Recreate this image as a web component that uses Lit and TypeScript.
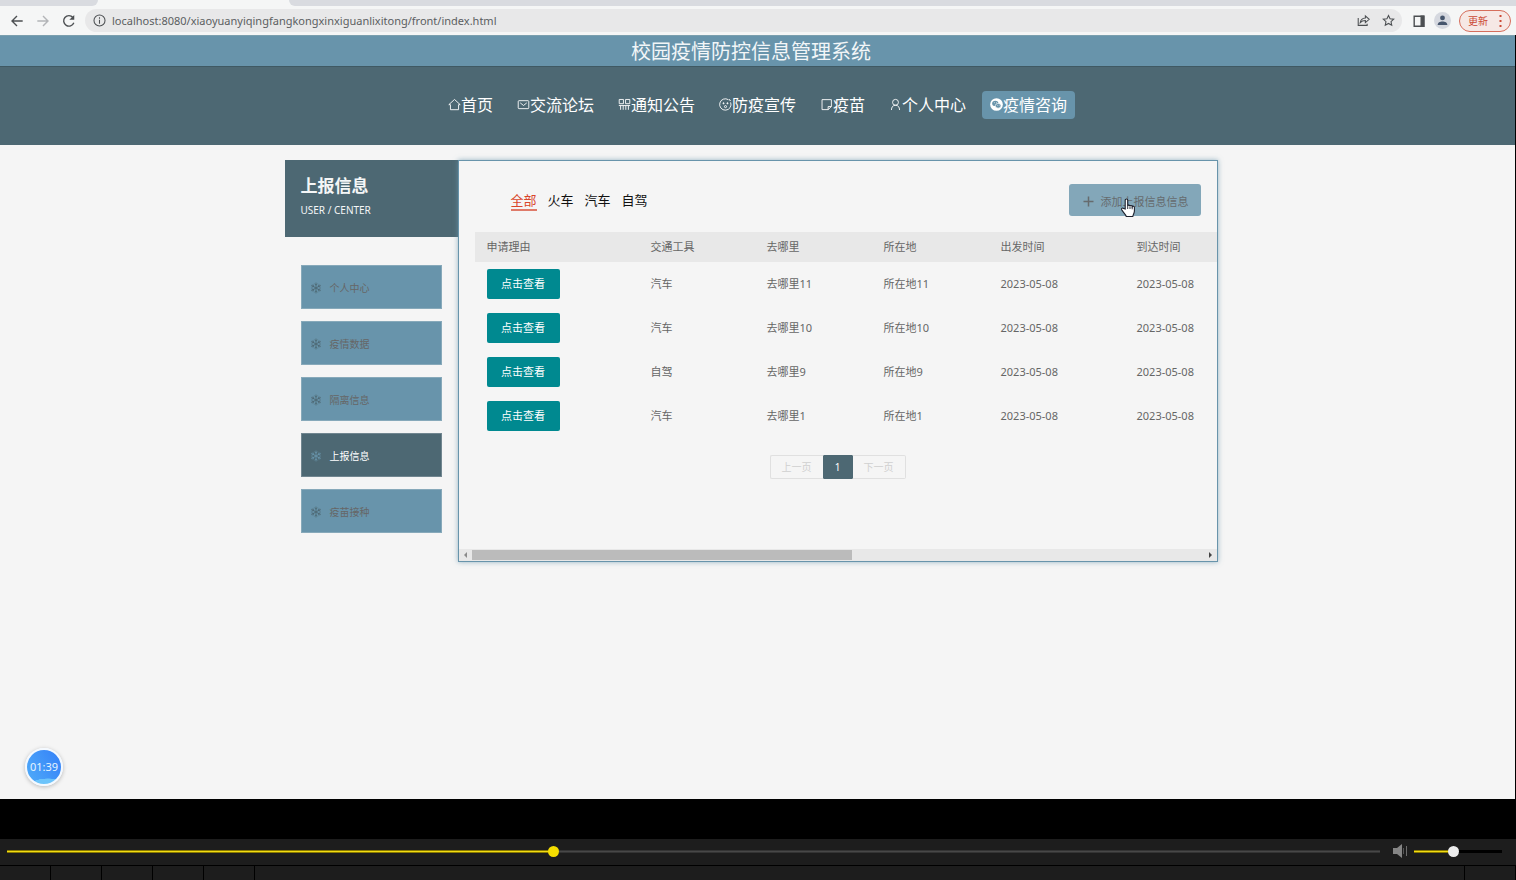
import { LitElement, html, css, svg } from "lit";
import { customElement, state } from "lit/decorators.js";
import { classMap } from "lit/directives/class-map.js";

const stroke = (body: unknown, cls = "glyph") => html`<svg class=${cls} viewBox="0 0 16 16" fill="none" stroke="currentColor" stroke-width="1.1" aria-hidden="true">${body}</svg>`;

const icons = {
  home: stroke(svg`<path d="M1 8.2 8 1.8l7 6.4h-2V14.4H3V8.2z"/>`),
  mail: stroke(svg`<rect x="1.5" y="3.3" width="13" height="9.8" rx="1"/><path d="M4 6l4 3.2L12 6"/>`),
  notice: stroke(svg`<path d="M1.5 1.8h5.2v5.2H1.500zM9.300 1.800h5.200v5.200H9.300zM1 9.300h14M3.200 9.300v5.200M6.400 9.300v5.200M9.600 9.300v5.200M12.800 9.300v5.200"/>`),
  face: stroke(svg`<path d="M14.300 5.400A7 7 0 1 1 11.600 2.100"/><path d="M12.600 1.300l.4 1.500 1.500.3"/><circle cx="5.600" cy="6.500" r=".7" fill="currentColor"/><circle cx="10.400" cy="6.500" r=".7" fill="currentColor"/><circle cx="8" cy="10.600" r="1.300"/>`),
  note: stroke(svg`<path d="M2.500 2h11.500v8.500L10 14.300H2.500zM10 14.300v-3.800h4"/>`),
  user: stroke(svg`<circle cx="8" cy="5.300" r="3.600"/><path d="M3 14.800c0-3.500 1.800-5.900 5-5.900s5 2.400 5 5.900"/>`),
  chat: html`<svg class="glyph" viewBox="0 0 16 16" aria-hidden="true"><circle cx="8" cy="8" r="7.800" fill="#fff"/><ellipse cx="6.500" cy="6.700" rx="3.800" ry="3.200" fill="#6894ab"/><ellipse cx="10" cy="9.600" rx="3.500" ry="2.900" fill="#6894ab" stroke="#fff" stroke-width=".8"/><g fill="#fff"><circle cx="5.300" cy="5.900" r=".6"/><circle cx="8" cy="5.900" r=".6"/><circle cx="9" cy="9" r=".5"/><circle cx="11.200" cy="9" r=".5"/></g></svg>`,
  snow: stroke(
    [0, 60, 120, 180, 240, 300].map((a) => svg`<path transform="rotate(${a} 8 8)" d="M8 8V.8M6 2.200 8 4.200l2-2"/>`),
    "snow"
  ),
};

const NAV = [
  { label: "首页", icon: icons.home },
  { label: "交流论坛", icon: icons.mail },
  { label: "通知公告", icon: icons.notice },
  { label: "防疫宣传", icon: icons.face },
  { label: "疫苗", icon: icons.note },
  { label: "个人中心", icon: icons.user },
  { label: "疫情咨询", icon: icons.chat },
];

const MENU = ["个人中心", "疫情数据", "隔离信息", "上报信息", "疫苗接种"];
const FILTERS = ["全部", "火车", "汽车", "自驾"];
const COLUMNS = ["申请理由", "交通工具", "去哪里", "所在地", "出发时间", "到达时间"];
const ROWS = [
  ["汽车", "去哪里11", "所在地11", "2023-05-08", "2023-05-08"],
  ["汽车", "去哪里10", "所在地10", "2023-05-08", "2023-05-08"],
  ["自驾", "去哪里9", "所在地9", "2023-05-08", "2023-05-08"],
  ["汽车", "去哪里1", "所在地1", "2023-05-08", "2023-05-08"],
];

@customElement("browser-bar")
class BrowserBar extends LitElement {
  static styles = css`
    :host { display: block; background: #f5f6f6; color: #4c4f52; }
    .tabs { display: flex; height: 6px; background: #f5f6f6; }
    .tab { width: 98px; background: #d9dbe0; border-bottom-right-radius: 6px; }
    .active { width: 191px; }
    .rest { flex: 1; background: #d9dbe0; border-bottom-left-radius: 6px; }
    .bar { display: flex; align-items: center; height: 29px; box-sizing: border-box; padding: 0 5px 0 10px; gap: 12px; }
    button { display: flex; align-items: center; justify-content: center; padding: 0; border: 0; background: none; color: inherit; font: inherit; }
    svg { display: block; width: 14px; height: 14px; fill: none; stroke: currentColor; stroke-width: 1.6; }
    .faded { color: #b3b5b8; }
    .address { flex: 1; display: flex; align-items: center; gap: 6px; height: 23px; margin-left: -3px; padding: 0 7px 0 8px; border-radius: 12px; background: #e8e8e9; }
    .address svg { width: 13px; height: 13px; stroke-width: 1.3; }
    input { flex: 1; min-width: 0; border: 0; padding: 0; outline: 0; background: none; color: #5b5e61; font: 11px/20px "Noto Sans", "Noto Sans CJK SC", sans-serif; }
    .tools { display: flex; gap: 12px; }
    .right { display: flex; align-items: center; gap: 8px; margin-left: -2px; }
    .avatar { width: 17px; height: 17px; border-radius: 50%; background: #d5d8df; color: #46566d; }
    .avatar svg { fill: currentColor; stroke: none; width: 13px; height: 13px; }
    .update { height: 22px; box-sizing: border-box; gap: 11px; padding: 0 8px; border: 1px solid #d66e5c; border-radius: 11px; background: #f6e8e5; color: #cb4a36; font-size: 10px; font-family: "Noto Sans CJK SC", sans-serif; }
    .dots { width: 3px; height: 12px; fill: currentColor; stroke: none; }
  `;
  render() {
    return html`
      <div class="tabs"><span class="tab"></span><span class="active"></span><span class="rest"></span></div>
      <div class="bar">
        <button aria-label="后退"><svg viewBox="0 0 16 16"><path d="M14.500 8H2.500M8 2.300 2.300 8 8 13.700"/></svg></button>
        <button class="faded" aria-label="前进"><svg viewBox="0 0 16 16"><path d="M1.500 8h12M8 2.300 13.700 8 8 13.700"/></svg></button>
        <button aria-label="刷新"><svg viewBox="0 0 16 16"><path d="M13.500 10A6 6 0 1 1 12.500 4"/><path d="M14 1v5.600H8.400z" fill="currentColor" stroke="none"/></svg></button>
        <div class="address">
          <svg viewBox="0 0 16 16"><circle cx="8" cy="8" r="6.800"/><path d="M8 7v5M8 4v1.800"/></svg>
          <input aria-label="地址" .value=${"localhost:8080/xiaoyuanyiqingfangkongxinxiguanlixitong/front/index.html"} />
          <div class="tools">
            <button aria-label="分享"><svg viewBox="0 0 16 16"><path d="M1.500 5v9h11v-2M4 10.500C4.500 7 7 5.200 10.300 5V2.300L15 6.500l-4.700 4V8C7.500 8 5.500 8.800 4 10.500z"/></svg></button>
            <button aria-label="收藏"><svg viewBox="0 0 16 16"><path d="M8 1.800l1.900 4.100 4.500.5-3.300 3 .9 4.500L8 11.600l-4 2.300.9-4.500-3.300-3 4.500-.5z"/></svg></button>
          </div>
        </div>
        <div class="right">
          <button aria-label="侧边栏"><svg viewBox="0 0 16 16"><path d="M2.500 2.500h11v11.500h-11z"/><path d="M10.500 2.500h3v11.500h-3z" fill="currentColor"/></svg></button>
          <button class="avatar" aria-label="用户"><svg viewBox="0 0 16 16"><circle cx="8" cy="4.800" r="3"/><path d="M2 13.500c0-3 3-4.300 6-4.300s6 1.300 6 4.300z"/></svg></button>
          <button class="update">更新<svg class="dots" viewBox="0 0 3 12"><rect x=".5" y="0" width="2" height="2"/><rect x=".5" y="5" width="2" height="2"/><rect x=".5" y="10" width="2" height="2"/></svg></button>
        </div>
      </div>`;
  }
}

@customElement("player-bar")
class PlayerBar extends LitElement {
  static styles = css`
    :host { display: block; padding-top: 40px; background: #000; }
    .controls { display: flex; align-items: center; height: 24px; padding: 0 14px 2px 7px; background: #1d1d1d; border-bottom: 1px solid #000; }
    input { appearance: none; margin: 0; height: 12px; background: none; }
    input::-webkit-slider-runnable-track { height: 3px; background: linear-gradient(#8a7a00 1px, #f2dc12 1px 2px, #8a7a00 2px) 0 0 / var(--fill) 100% no-repeat, var(--track); }
    input::-webkit-slider-thumb { appearance: none; width: 11px; height: 11px; margin-top: -4px; border-radius: 50%; background: var(--thumb); }
    .seek { flex: 1; --track: linear-gradient(#2a2a2a, #484848, #2a2a2a); --thumb: #f5de00; }
    .volume { width: 88px; --track: #000; --thumb: #ececec; }
    svg { width: 15px; height: 14px; margin: 0 6px 0 13px; }
    .cells { display: flex; height: 14px; background: #1d1d1d; }
    .cells span { width: 50px; border-right: 1px solid #000; }
    .cells .wide { flex: 1; }
  `;
  render() {
    return html`
      <div class="controls">
        <input class="seek" type="range" aria-label="播放进度" min="0" max="1000" value="397" style="--fill:39.7%" />
        <svg viewBox="0 0 15 14" aria-hidden="true"><path d="M0 4h4l5-4v14l-5-4H0z" fill="#858585"/><path d="M10.500 4v6" stroke="#555"/><path d="M13.500 2v10" stroke="#6c6c6c"/></svg>
        <input class="volume" type="range" aria-label="音量" min="0" max="100" value="44" style="--fill:44%" />
      </div>
      <div class="cells"><span></span><span></span><span></span><span></span><span></span><span class="wide"></span><span></span></div>`;
  }
}

@customElement("app-root")
class AppRoot extends LitElement {
  @state() filter = 0;

  static styles = css`
    :host { display: flex; flex-direction: column; min-height: 100vh; background: #000; color: #666; font: 11px/16px "Noto Sans", "Noto Sans CJK SC", sans-serif; }
    button { font: inherit; }
    a { color: inherit; text-decoration: none; }
    .screen { position: relative; flex: 1; display: flex; flex-direction: column; margin-right: 1px; background: #f5f5f5; }
    h1 { margin: 0; padding: 2px 13px 0 0; background: #6894ab; color: #f2f6f8; font-weight: 400; font-size: 20px; line-height: 28px; text-align: center; border-top: 1px solid #7b9fae; }
    nav { display: flex; justify-content: center; align-items: center; gap: 8px; height: 79px; box-sizing: border-box; padding-bottom: 2px; background: #4d6873; box-shadow: inset 0 1px 0 #3f5963; color: #fff; font-size: 16px; line-height: 24px; }
    nav a { display: flex; align-items: center; padding: 2px 8px; border-radius: 4px; }
    nav a:last-child { background: #6894ab; }
    .glyph { width: 13px; height: 13px; }
    main { display: flex; align-items: flex-start; width: 946px; max-width: 100%; box-sizing: border-box; margin: 15px auto 0; padding-right: 13px; }
    aside { width: 174px; flex: none; }
    .head { height: 77px; box-sizing: border-box; padding: 14px 16px 0; background: #4d6873; color: #f4f6f7; }
    h2 { margin: 0 0 4px; font-size: 17px; line-height: 24px; font-weight: 700; }
    .head p { margin: 0; font-size: 10px; line-height: 16px; }
    .menu { display: flex; flex-direction: column; gap: 12px; padding: 28px 17px 0 16px; }
    .menu a { display: flex; align-items: center; gap: 8px; height: 44px; box-sizing: border-box; padding: 2px 8px 0; border: 1px solid #87a9ba; background: #6894ab; font-size: 10px; }
    .menu a.on { background: #4d6873; border-color: #718690; color: #fff; }
    .snow { width: 12px; height: 12px; color: #4d6873; }
    .on .snow { color: #6894ab; }
    .panel { flex: 1; min-width: 0; display: flex; flex-direction: column; height: 402px; box-sizing: border-box; margin-left: -1px; border: 1px solid #6894ab; box-shadow: 0 0 5px rgba(104, 148, 171, 0.7); }
    .top { display: flex; justify-content: space-between; align-items: center; padding: 23px 16px 16px 52px; }
    .filters { display: flex; gap: 11px; padding-top: 2px; }
    .filters button { padding: 0; border: 0; border-bottom: 2px solid transparent; background: none; color: #111; font-size: 13px; line-height: 18px; }
    .filters .current { color: #d9452b; border-color: #df7a69; }
    .add { position: relative; display: flex; align-items: center; gap: 7px; height: 32px; padding: 3px 12px 0 14px; border: 0; border-radius: 3px; background: #83a7b9; color: #666b6e; }
    .add .plus { width: 11px; height: 11px; }
    .hand { position: absolute; left: 51px; top: 14px; width: 16px; height: 20px; }
    .scroll { flex: 1; overflow: hidden; padding-left: 16px; }
    table { width: 100%; table-layout: fixed; border-collapse: collapse; }
    th, td { box-sizing: border-box; padding: 0 0 0 12px; white-space: nowrap; }
    th { height: 30px; background: #e8e8e8; font-weight: 400; text-align: left; }
    td { height: 44px; }
    .c0 { width: 164px; }
    .c1 { width: 116px; }
    .c2, .c3 { width: 117px; }
    .c4 { width: 136px; }
    .view { display: block; width: 73px; height: 30px; padding: 0; border: 0; border-radius: 2px; background: #008990; color: #fff; }
    .pages { display: flex; justify-content: center; padding: 17px 16px 0 0; }
    .pages button { height: 24px; padding: 0 11px; border: 1px solid #e0e0e0; background: none; color: #d0d0d0; font-size: 10px; }
    .pages .now { padding: 0; width: 30px; border-color: #4d6873; border-radius: 1px; background: #4d6873; color: #fff; }
    .pages button:first-child { border-right: 0; border-radius: 2px 0 0 2px; }
    .pages button:last-child { border-left: 0; border-radius: 0 2px 2px 0; }
    .bar { display: flex; align-items: center; height: 12px; background: #e8e8e8; }
    .bar svg { width: 13px; height: 8px; }
    .track { flex: 1; }
    .thumb { width: 380px; height: 10px; background: #bbb; }
    .timer { position: absolute; left: 25px; bottom: 13px; display: flex; align-items: center; justify-content: center; width: 34px; height: 34px; border: 2px solid #f4f9ff; border-radius: 50%; background: radial-gradient(18px 7px at 62% 104%, #6cc4fb 96%, transparent), linear-gradient(60deg, #50acf9, #3480f8); box-shadow: 0 1px 4px rgba(0, 0, 0, 0.25); color: #e6f4ff; }
  `;

  render() {
    return html`
      <browser-bar></browser-bar>
      <div class="screen">
        <h1>校园疫情防控信息管理系统</h1>
        <nav>${NAV.map((n) => html`<a href="#">${n.icon}${n.label}</a>`)}</nav>
        <main>
          <aside>
            <div class="head"><h2>上报信息</h2><p>USER / CENTER</p></div>
            <div class="menu">${MENU.map((m, i) => html`<a href="#" class=${classMap({ on: i === 3 })}>${icons.snow}${m}</a>`)}</div>
          </aside>
          <section class="panel">
            <div class="top">
              <div class="filters">
                ${FILTERS.map((f, i) => html`<button class=${classMap({ current: i === this.filter })} @click=${() => (this.filter = i)}>${f}</button>`)}
              </div>
              <button class="add">
                <svg class="plus" viewBox="0 0 11 11" stroke="currentColor" stroke-width="1.500"><path d="M5.500 .5v10M.5 5.500h10"/></svg>添加上报信息信息
                <svg class="hand" viewBox="0 0 16 20"><path d="M5.200 11V2.300c0-1.800 2.500-1.800 2.500 0V8c.2-1.300 2.100-1.200 2.300.2.300-1 2-.9 2.200.4.500-.8 2.200-.5 2.200 1v3.300c0 2.600-1.300 3.200-1.600 5.600H6.300C5.500 16 2.800 14 1.700 11.800c-.7-1.500.9-2.300 2-1.300z" fill="#fff" stroke="#1c1f2b" stroke-width="1.100"/><path d="M7.700 8v3M10 8.500V11M12.200 9v2.300" stroke="#1c1f2b" stroke-width=".9"/></svg>
              </button>
            </div>
            <div class="scroll">
              <table>
                <thead><tr>${COLUMNS.map((c, i) => html`<th class="c${i}">${c}</th>`)}</tr></thead>
                <tbody>
                  ${ROWS.map((r) => html`<tr><td><button class="view">点击查看</button></td>${r.map((v) => html`<td>${v}</td>`)}</tr>`)}
                </tbody>
              </table>
              <div class="pages"><button disabled>上一页</button><button class="now">1</button><button disabled>下一页</button></div>
            </div>
            <div class="bar">
              <svg viewBox="0 0 13 8"><path d="M8 1v6L5 4z" fill="#8b8b8b"/></svg>
              <div class="track"><div class="thumb"></div></div>
              <svg viewBox="0 0 13 8"><path d="M5 1v6l3-3z" fill="#444"/></svg>
            </div>
          </section>
        </main>
        <div class="timer">01:39</div>
      </div>
      <player-bar></player-bar>`;
  }
}
